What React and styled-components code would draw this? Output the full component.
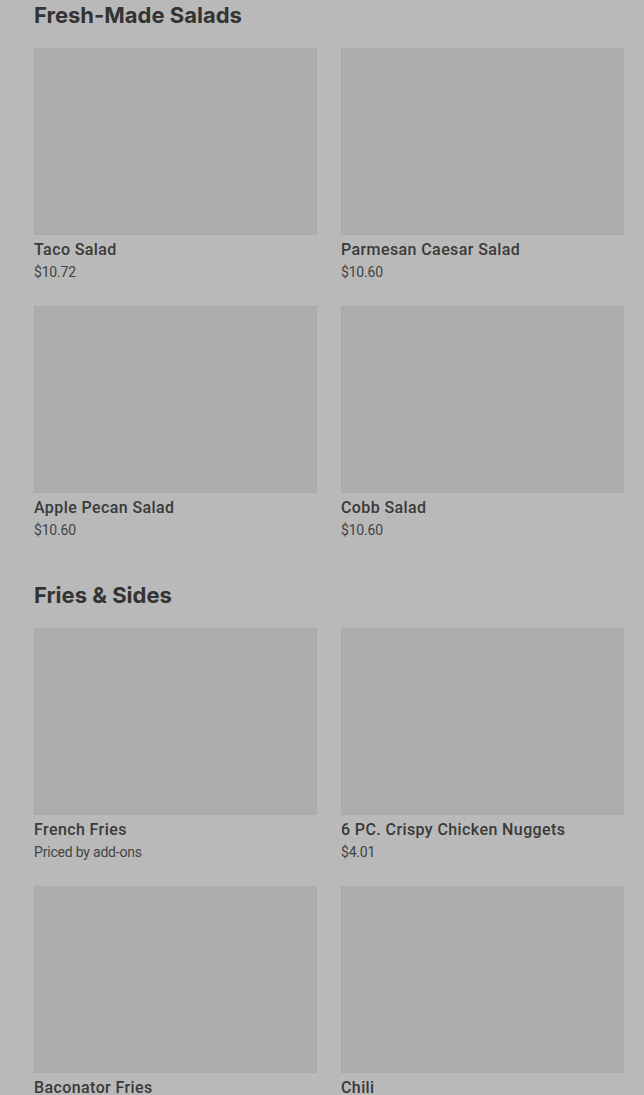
import React from 'react'
import styled, {createGlobalStyle} from 'styled-components'

const GlobalStyle = createGlobalStyle`
  html, body {
    margin: 0;
    padding: 0;
    background: #b9b9b9;
  }
  body {
    font-family: Inter, "Liberation Sans", sans-serif;
  }
`;

const Page = styled.div`
  display: flex;
  flex-direction: column;
  gap: 41px;
  padding: 1px 20px 0 34px;
  background: #b9b9b9;
  min-height: 100vh;
`;

const Section = styled.section`
  display: flex;
  flex-direction: column;
  gap: 19px;
`;

const SectionTitle = styled.h2`
  margin: 0;
  font-size: 22px;
  line-height: 28px;
  font-weight: 700;
  letter-spacing: 0;
  color: #333333;
`;

const Grid = styled.div`
  display: grid;
  grid-template-columns: 283px 283px;
  column-gap: 24px;
  row-gap: 24px;
`;

const Card = styled.div`
  display: flex;
  flex-direction: column;
`;

const Thumb = styled.div`
  height: 187px;
  background: #adadad;
  box-shadow: inset 0 0 0 1px #aaaaaa;
`;

const Name = styled.div`
  margin-top: 5px;
  font-family: Roboto, "Liberation Sans", sans-serif;
  font-size: 16px;
  line-height: 20px;
  font-weight: 500;
  letter-spacing: 0.4px;
  color: #3a3a3a;
`;

const Price = styled.div`
  margin-top: 2px;
  font-family: Roboto, "Liberation Sans", sans-serif;
  font-size: 14px;
  line-height: 20px;
  color: #444444;
  letter-spacing: -0.2px;
`;

const sections = [
  {
    title: 'Fresh-Made Salads',
    items: [
      {name: 'Taco Salad', price: '$10.72'},
      {name: 'Parmesan Caesar Salad', price: '$10.60'},
      {name: 'Apple Pecan Salad', price: '$10.60'},
      {name: 'Cobb Salad', price: '$10.60'},
    ],
  },
  {
    title: 'Fries & Sides',
    items: [
      {name: 'French Fries', price: 'Priced by add-ons'},
      {name: '6 PC. Crispy Chicken Nuggets', price: '$4.01'},
      {name: 'Baconator Fries', price: '$5.49'},
      {name: 'Chili', price: '$4.79'},
    ],
  },
];

function App() {
  return (
    <>
      <GlobalStyle />
      <Page>
        {sections.map(s => (
          <Section key={s.title}>
            <SectionTitle>{s.title}</SectionTitle>
            <Grid>
              {s.items.map(item => (
                <Card key={item.name}>
                  <Thumb />
                  <Name>{item.name}</Name>
                  <Price>{item.price}</Price>
                </Card>
              ))}
            </Grid>
          </Section>
        ))}
      </Page>
    </>
  )
}

export default App
